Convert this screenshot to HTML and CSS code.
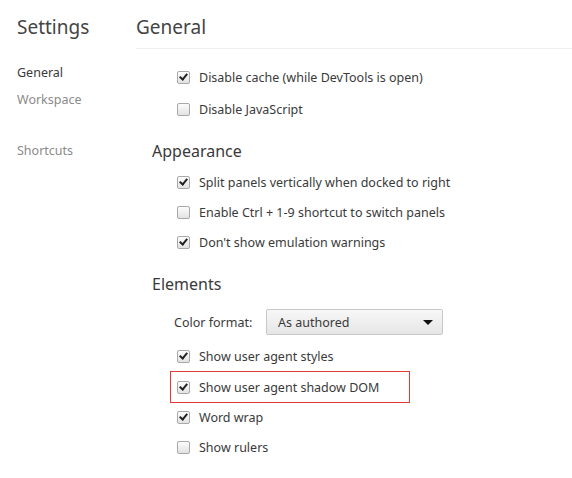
FILE: index.html
```html
<!DOCTYPE html>
<html>
<head>
<title>Settings</title>
<link rel="stylesheet" href="styles.css">
</head>
<body>
  <div id="page">
    <div id="sidebar">
      <h1 class="title">Settings</h1>
      <div class="tabs">
        <div class="tab selected">General</div>
        <div class="tab">Workspace</div>
        <div class="tab gap">Shortcuts</div>
      </div>
    </div>
    <div id="content">
      <h1 class="title rule">General</h1>
      <div class="section first">
        <label class="row"><span class="box checked"></span>Disable cache (while DevTools is open)</label>
        <label class="row"><span class="box"></span>Disable JavaScript</label>
      </div>
      <div class="section">
        <h2>Appearance</h2>
        <label class="row"><span class="box checked"></span>Split panels vertically when docked to right</label>
        <label class="row"><span class="box"></span>Enable Ctrl + 1-9 shortcut to switch panels</label>
        <label class="row"><span class="box checked"></span>Don't show emulation warnings</label>
      </div>
      <div class="section">
        <h2>Elements</h2>
        <div class="field">
          <span class="field_label">Color format:</span>
          <div class="select">
            <span>As authored</span>
            <span class="arrow"></span>
          </div>
        </div>
        <label class="row"><span class="box checked"></span>Show user agent styles</label>
        <label class="row marked"><span class="box checked"></span>Show user agent shadow DOM</label>
        <label class="row"><span class="box checked"></span>Word wrap</label>
        <label class="row"><span class="box"></span>Show rulers</label>
      </div>
    </div>
  </div>
</body>
</html>
```
FILE: styles.css
```css
body {
  margin: 0;
  background-color: #fff;
  color: #3a3a3a;
  font-family: "Noto Sans", "Open Sans", sans-serif;
  font-size: 12.5px;
}
#page {
  display: flex;
}
#sidebar {
  width: 119px;
  padding-left: 17px;
}
#content {
  flex-grow: 1;
}
.title {
  font-size: 19px;
  font-weight: normal;
  line-height: 28px;
  margin: 13px 0 0;
  color: #444;
}
.title.rule {
  border-bottom: 1px solid #eee;
  padding-bottom: 7px;
}
.tabs {
  margin-top: 18px;
}
.tab {
  color: #8a8a8a;
  height: 27px;
  line-height: 27px;
}
.tab.selected {
  color: #3a3a3a;
}
.tab.gap {
  margin-top: 24px;
}
.section {
  padding-left: 16px;
}
.section.first {
  margin-top: 13px;
}
.section.first .row + .row {
  margin-top: 2px;
}
h2 {
  font-size: 16px;
  font-weight: normal;
  line-height: 20px;
  margin: 17px 0 6px;
  color: #3a3a3a;
}
.row {
  display: flex;
  align-items: center;
  height: 30px;
  width: 222px;
  padding-left: 25px;
  white-space: nowrap;
}
.row.marked {
  outline: 1px solid #e53935;
  margin: 1px 0 0 19px;
  padding-left: 6px;
  width: 232px;
}
.box {
  width: 11px;
  height: 11px;
  border: 1px solid #a9a9a9;
  border-radius: 2px;
  background: linear-gradient(#fcfcfc, #e2e2e2);
  margin-right: 9px;
  position: relative;
  flex-shrink: 0;
}
.box.checked::after {
  content: "";
  position: absolute;
  left: 3px;
  top: 0;
  width: 3px;
  height: 6px;
  border: solid #222;
  border-width: 0 2px 2px 0;
  transform: rotate(40deg);
}
.field {
  display: flex;
  align-items: center;
  height: 30px;
  margin: 13px 0 4px;
  padding-left: 22px;
}
.field_label {
  width: 92px;
}
.select {
  box-sizing: border-box;
  display: flex;
  align-items: center;
  justify-content: space-between;
  width: 177px;
  height: 26px;
  padding: 0 9px 0 11px;
  border: 1px solid #c8c8c8;
  border-radius: 2px;
  background: linear-gradient(#f7f7f7, #e6e6e6);
}
.arrow {
  width: 0;
  height: 0;
  border-left: 5px solid transparent;
  border-right: 5px solid transparent;
  border-top: 5px solid #111;
}
```
